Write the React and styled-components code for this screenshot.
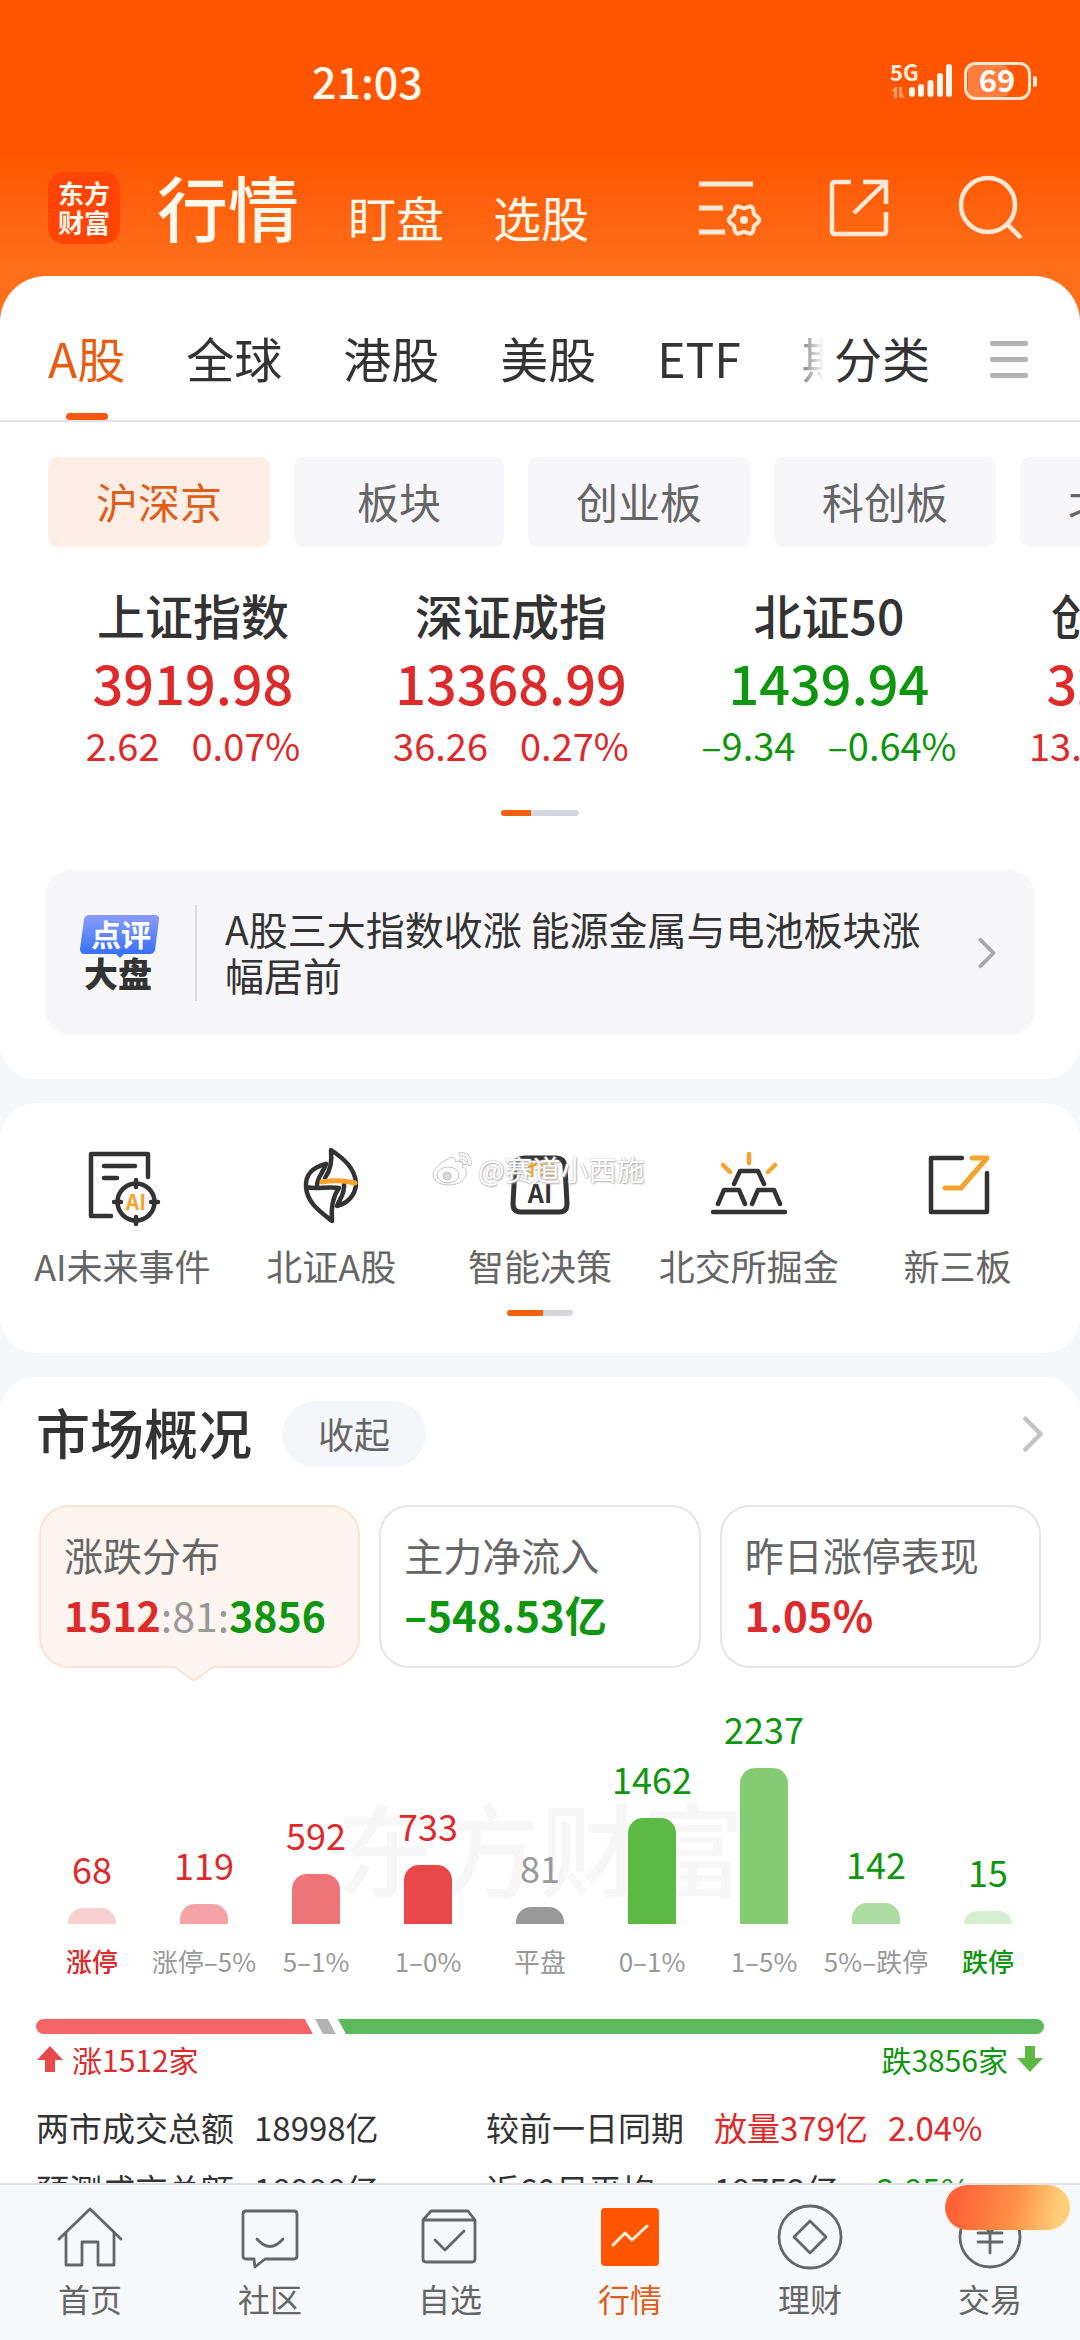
import React, { useState } from 'react'
import styled, { createGlobalStyle, css } from 'styled-components'

const RED = '#dd2a2a'
const GREEN = '#0f960f'
const ORANGE = '#ff5500'
const AMBER = '#f5a52f'
const INK = '#333333'
const GREY = '#666666'

const tones = { up: RED, down: GREEN, flat: '#999999', ink: INK }

const markets = ['A股', '全球', '港股', '美股', 'ETF', '期货']
const boards = ['沪深京', '板块', '创业板', '科创板', '北交所']

const indices = [
  { name: '上证指数', value: '3919.98', change: '2.62', rate: '0.07%', tone: 'up' },
  { name: '深证成指', value: '13368.99', change: '36.26', rate: '0.27%', tone: 'up' },
  { name: '北证50', value: '1439.94', change: '–9.34', rate: '–0.64%', tone: 'down' },
  { name: '创业板指', value: '3229.58', change: '13.02', rate: '0.40%', tone: 'up' },
]

const distribution = [
  { count: 68, label: '涨停', height: 16, fill: '#f9d0d0', tone: 'up', strong: true },
  { count: 119, label: '涨停–5%', height: 20, fill: '#f4a4a6', tone: 'up' },
  { count: 592, label: '5–1%', height: 50, fill: '#ee7577', tone: 'up' },
  { count: 733, label: '1–0%', height: 59, fill: '#e84849', tone: 'up' },
  { count: 81, label: '平盘', height: 17, fill: '#999999', tone: 'flat' },
  { count: 1462, label: '0–1%', height: 106, fill: '#5cb944', tone: 'down' },
  { count: 2237, label: '1–5%', height: 156, fill: '#84cb74', tone: 'down' },
  { count: 142, label: '5%–跌停', height: 21, fill: '#aedda3', tone: 'down' },
  { count: 15, label: '跌停', height: 13, fill: '#d5efd0', tone: 'down', strong: true },
]

// six-lobed outline of the settings gear
const gearPoints = Array.from({ length: 72 }, (_, i) => {
  const a = (i / 72) * Math.PI * 2
  const r = 13.4 + 1.7 * Math.cos(a * 6)
  return `${(50 + r * Math.cos(a)).toFixed(2)},${(48 + r * Math.sin(a)).toFixed(2)}`
}).join(' ')

function App() {
  const [market, setMarket] = useState('A股')
  const [board, setBoard] = useState('沪深京')
  const [page, setPage] = useState('行情')

  return (
    <>
      <GlobalStyle />
      <Page>
        <Scroll>
          <StatusBar>
            <Clock>21:03</Clock>
            <SignalIcon />
          </StatusBar>
          <NavBar>
            <Logo><span>东方</span><span>财富</span></Logo>
            <NavTitle>行情</NavTitle>
            <NavLink href="#">盯盘</NavLink>
            <NavLink href="#">选股</NavLink>
            <NavActions>
              <IconButton aria-label="设置"><ListGearIcon /></IconButton>
              <IconButton aria-label="分享"><ShareIcon /></IconButton>
              <IconButton aria-label="搜索"><SearchIcon /></IconButton>
            </NavActions>
          </NavBar>

          <Sheet>
            <TabRow>
              <TabList>
                {markets.map(m => (
                  <Tab key={m} $active={m === market} onClick={() => setMarket(m)}>{m}</Tab>
                ))}
              </TabList>
              <Tab>分类</Tab>
              <MenuButton aria-label="菜单"><i /><i /><i /></MenuButton>
            </TabRow>
            <Chips>
              {boards.map(b => (
                <Chip key={b} $active={b === board} onClick={() => setBoard(b)}>{b}</Chip>
              ))}
            </Chips>
            <IndexRow>
              {indices.map(item => (
                <IndexCard key={item.name}>
                  <IndexName>{item.name}</IndexName>
                  <IndexValue $tone={item.tone}>{item.value}</IndexValue>
                  <IndexChange $tone={item.tone}>
                    <span>{item.change}</span>
                    <span>{item.rate}</span>
                  </IndexChange>
                </IndexCard>
              ))}
            </IndexRow>
            <Pager $width={78} $on={30} />
            <Notice href="#">
              <ReviewBadge />
              <NoticeText>A股三大指数收涨 能源金属与电池板块涨幅居前</NoticeText>
              <Chevron width={20} height={32} color="#a8a8a8" />
            </Notice>
          </Sheet>

          <ToolCard>
            <Tools>
              <Tool href="#"><EventIcon />AI未来事件</Tool>
              <Tool href="#"><FlameIcon />北证A股</Tool>
              <Tool href="#"><DecisionIcon />智能决策</Tool>
              <Tool href="#"><IngotIcon />北交所掘金</Tool>
              <Tool href="#"><BoardIcon />新三板</Tool>
            </Tools>
            <Pager $width={66} $on={36} />
            <Signature>
              <WeiboIcon />
              @赛道小西施
            </Signature>
          </ToolCard>

          <MarketCard>
            <MarketHead>
              <h2>市场概况</h2>
              <Fold>收起</Fold>
              <Chevron width={22} height={38} color="#c4c4c4" />
            </MarketHead>
            <Summary>
              <SummaryCard $active>
                <SummaryLabel>涨跌分布</SummaryLabel>
                <SummaryValue $small>
                  <Tone $tone="up">1512</Tone>
                  <Thin>:81:</Thin>
                  <Tone $tone="down">3856</Tone>
                </SummaryValue>
                <Pointer viewBox="0 0 42 15"><path d="M0 0h42v1c-4 0-5 2-7 4l-11 8c-2 1-4 1-6 0L7 5C5 3 4 1 0 1z" fill="#fef5f0" /><path d="M0 1c4 0 5 2 7 4l11 8c2 1 4 1 6 0l11-8c2-2 3-4 7-4" fill="none" stroke="#fae4d8" strokeWidth="2" /></Pointer>
              </SummaryCard>
              <SummaryCard>
                <SummaryLabel>主力净流入</SummaryLabel>
                <SummaryValue><Tone $tone="down">–548.53亿</Tone></SummaryValue>
              </SummaryCard>
              <SummaryCard>
                <SummaryLabel>昨日涨停表现</SummaryLabel>
                <SummaryValue><Tone $tone="up">1.05%</Tone></SummaryValue>
              </SummaryCard>
            </Summary>

            <Chart>
              <ChartMark>东方财富</ChartMark>
              {distribution.map(d => (
                <Column key={d.label}>
                  <Count $tone={d.tone}>{d.count}</Count>
                  <Bar $fill={d.fill} style={{ height: d.height }} />
                  <Range $tone={d.strong ? d.tone : 'flat'} $strong={d.strong}>{d.label}</Range>
                </Column>
              ))}
            </Chart>

            <Ratio>
              <RatioUp />
              <RatioFlat />
              <RatioDown />
            </Ratio>
            <RatioLabels>
              <RatioLabel $tone="up"><ArrowIcon color="#e84849" />涨1512家</RatioLabel>
              <RatioLabel $tone="down">跌3856家<ArrowIcon color="#5cb944" down /></RatioLabel>
            </RatioLabels>

            <Stats>
              <Stat>
                <dt>两市成交总额</dt>
                <dd>18998亿</dd>
              </Stat>
              <Stat $wide>
                <dt>较前一日同期</dt>
                <dd><Tone $tone="up">放量379亿</Tone><Tone $tone="up">2.04%</Tone></dd>
              </Stat>
              <Stat>
                <dt>预测成交总额</dt>
                <dd>18998亿</dd>
              </Stat>
              <Stat $wide>
                <dt>近60日平均</dt>
                <dd><span>19752亿</span><Tone $tone="down">–3.85%</Tone></dd>
              </Stat>
            </Stats>
          </MarketCard>
        </Scroll>

        <TabBar>
          {tabs.map(({ name, Icon }) => (
            <TabItem key={name} $active={name === page} onClick={() => setPage(name)}>
              <Icon />
              {name}
            </TabItem>
          ))}
          <Bubble />
        </TabBar>
      </Page>
    </>
  )
}

export default App

function SignalIcon() {
  return (
    <svg width="150" height="40" viewBox="0 0 150 40" fill="none">
      <text x="0" y="21" fontSize="22" fontWeight="700" fill="#fff0e2">5G</text>
      <g fill="#ff9a66">
        <path d="M1 31l6-5v12H4v-7zM15 38l-6-1V27h3v6z" />
      </g>
      <g stroke="#fff5ea" strokeWidth="6" strokeLinecap="round">
        <path d="M22 30v4M31 27v7M40.500 23v11M50 16v18M59 7v27" />
      </g>
      <rect x="78" y="5" width="41" height="32" rx="6" fill="#ff7d3d" />
      <rect x="75.500" y="3.500" width="64" height="35" rx="10" stroke="#ffe6d0" strokeWidth="3" />
      <rect x="143" y="16" width="4" height="11" rx="2" fill="#ffe6d0" />
      <text x="107" y="32" fontSize="31" fontWeight="700" textAnchor="middle" fill="#fff">69</text>
    </svg>
  )
}

function ListGearIcon() {
  return (
    <svg width="72" height="72" viewBox="0 0 72 72" fill="none" stroke="#ffe9d6" strokeWidth="5">
      <path d="M5 12h54M5 36h24M5 60h26" />
      <polygon points={gearPoints} strokeWidth="4" strokeLinejoin="round" />
      <circle cx="50" cy="48" r="4" fill="#ffe9d6" stroke="none" />
    </svg>
  )
}

function ShareIcon() {
  return (
    <svg width="72" height="72" viewBox="0 0 72 72" fill="none" stroke="#ffe9d6" strokeWidth="4.500">
      <path d="M27 10H11q-3 0-3 3v46q0 3 3 3h48q3 0 3-3V40M39 10h23v22M30 41l31-30" />
    </svg>
  )
}

function SearchIcon() {
  return (
    <svg width="72" height="72" viewBox="0 0 72 72" fill="none" stroke="#ffe9d6" strokeWidth="4.500">
      <circle cx="34" cy="33" r="27" />
      <path d="M53 52l14 14" />
    </svg>
  )
}

function Chevron({ width, height, color }) {
  return (
    <svg width={width} height={height} viewBox="0 0 20 34" fill="none" stroke={color} strokeWidth="4" strokeLinecap="round" strokeLinejoin="round">
      <path d="M3 3l14 14L3 31" />
    </svg>
  )
}

function ReviewBadge() {
  return (
    <svg width="80" height="80" viewBox="0 0 80 80">
      <defs>
        <linearGradient id="badge" x1="0" y1="0" x2="0" y2="1">
          <stop offset="0" stopColor="#8b9dfb" />
          <stop offset="1" stopColor="#2f6df6" />
        </linearGradient>
      </defs>
      <path d="M9 2h66q5 0 4 5l-4 30q-1 4-5 4H44l-4 4-4-4H5q-5 0-5-5L4 6q1-4 5-4z" fill="url(#badge)" />
      <text x="41" y="33" fontSize="30" fontWeight="700" textAnchor="middle" fill="#fff">点评</text>
      <text x="38" y="74" fontSize="34" fontWeight="900" textAnchor="middle" fill="#333">大盘</text>
    </svg>
  )
}

function EventIcon() {
  return (
    <svg width="80" height="80" viewBox="0 0 80 80" fill="none" stroke={INK} strokeWidth="4.500" strokeLinecap="round" strokeLinejoin="round">
      <path d="M29 70H9V8h57v23M22 20h31M22 32h13" />
      <circle cx="54" cy="56" r="18.500" />
      <path d="M54 34v7M54 71v7M32 56h7M69 56h7" />
      <text x="54" y="64" fontSize="21" fontWeight="700" textAnchor="middle" fill={AMBER} stroke="none">AI</text>
    </svg>
  )
}

function FlameIcon() {
  return (
    <svg width="80" height="80" viewBox="0 0 80 80" fill="none" stroke={INK} strokeWidth="4.500" strokeLinejoin="round" strokeLinecap="round">
      <path d="M34 32C40 24 41 14 40 4c12 8 24 18 25 33" />
      <path d="M35 18C22 21 14 29 15 41c10 3 22-1 33 1-6 8-8 20-7 33C27 64 16 56 15 41" />
      <path d="M35 18c-3 9-9 13-9 22M53 38c1 10-4 14-7 22 12-3 18-12 19-21" />
      <path d="M31 36q17-3 33 1" stroke={AMBER} strokeWidth="5" />
    </svg>
  )
}

function DecisionIcon() {
  return (
    <svg width="80" height="80" viewBox="0 0 80 80" fill="none" stroke={INK} strokeWidth="5" strokeLinecap="round" strokeLinejoin="round">
      <path d="M24 12h32q8 0 9 8l2 38q0 8-8 8H21q-8 0-8-8l2-38q1-8 9-8z" />
      <path d="M29 21l7-3M32 18v12l-4-4M42 19h11M42 24h11M42 29h11" stroke={AMBER} strokeWidth="3" />
      <text x="40" y="57" fontSize="25" fontWeight="700" textAnchor="middle" fill={INK} stroke="none">AI</text>
    </svg>
  )
}

function IngotIcon() {
  return (
    <svg width="80" height="80" viewBox="0 0 80 80" fill="none" stroke={INK} strokeWidth="4.500" strokeLinecap="round" strokeLinejoin="round">
      <path d="M4 66h72M25 38l6-13h18l6 13M9 58l6-14h15l6 14M43 58l6-14h16l6 14" />
      <path d="M40 8v9M14 19l7 7M66 19l-7 7" stroke={AMBER} />
    </svg>
  )
}

function BoardIcon() {
  return (
    <svg width="80" height="80" viewBox="0 0 80 80" fill="none" stroke={INK} strokeWidth="4.500" strokeLinecap="round" strokeLinejoin="round">
      <path d="M44 12H13v54h56V27" />
      <path d="M54 12h15L43 42H27" stroke={AMBER} strokeWidth="5" />
    </svg>
  )
}

function WeiboIcon() {
  return (
    <svg width="42" height="36" viewBox="0 0 42 36" fill="#fff" stroke="#c4c4c4" strokeWidth="1">
      <path d="M16 8c4-3 8-2 7 3 6-2 9 0 7 5 4 1 5 4 4 8-2 7-10 10-17 10C8 34 1 30 1 24 1 18 9 11 16 8z" />
      <ellipse cx="16" cy="24" rx="11" ry="8" />
      <circle cx="15" cy="25" r="4" fill="#d8d8d8" />
      <path d="M27 2c7-2 14 4 12 13l-3-1c1-6-3-10-8-9zM28 8c4-1 7 2 6 6l-3-1c0-2-1-3-3-2z" />
    </svg>
  )
}

function ArrowIcon({ color, down }) {
  return (
    <svg width="28" height="28" viewBox="0 0 28 28" fill={color}>
      <path d={down ? 'M9 1h10v12h8L14 27 1 13h8z' : 'M9 27h10V15h8L14 1 1 15h8z'} />
    </svg>
  )
}

function TabIcon({ children }) {
  return (
    <svg width="72" height="68" viewBox="0 0 72 68" fill="none" stroke={GREY} strokeWidth="2.800" strokeLinejoin="round" strokeLinecap="round">
      {children}
    </svg>
  )
}

const HomeIcon = () => (
  <TabIcon><path d="M5 35L36 5l31 30M12 29v32h16V38h16v23h16V29" /></TabIcon>
)

const ChatIcon = () => (
  <TabIcon>
    <path d="M12 7h48q3 0 3 3v42q0 3-3 3H31l-10 8-1-8h-8q-3 0-3-3V10q0-3 3-3z" />
    <path d="M23 35q13 15 26 0" />
  </TabIcon>
)

const PickIcon = () => (
  <TabIcon>
    <path d="M9 16h52v39q0 3-3 3H12q-3 0-3-3V16l8-9h37l7 9M21 36l10 10 19-19" />
  </TabIcon>
)

const TrendIcon = () => (
  <TabIcon>
    <rect x="7" y="4" width="58" height="58" rx="4" fill={ORANGE} stroke="none" />
    <path d="M19 41l12-12 7 7 15-14" stroke="#ffeedd" strokeWidth="3" />
  </TabIcon>
)

const CoinIcon = () => (
  <TabIcon>
    <circle cx="36" cy="33" r="31" />
    <path d="M36 17l16 16-16 16-16-16z" />
  </TabIcon>
)

const YuanIcon = () => (
  <TabIcon>
    <circle cx="36" cy="33" r="30" />
    <path d="M26 16l10 13 10-13M24 29h24M24 38h24M36 29v20" />
  </TabIcon>
)

const tabs = [
  { name: '首页', Icon: HomeIcon },
  { name: '社区', Icon: ChatIcon },
  { name: '自选', Icon: PickIcon },
  { name: '行情', Icon: TrendIcon },
  { name: '理财', Icon: CoinIcon },
  { name: '交易', Icon: YuanIcon },
]

const GlobalStyle = createGlobalStyle`
  * {
    box-sizing: border-box;
    margin: 0;
    padding: 0;
  }
  body {
    font-family: 'Noto Sans CJK SC', 'Noto Sans', sans-serif;
    color: ${INK};
    background: #f5f7fa;
  }
  button {
    font: inherit;
    color: inherit;
    background: none;
    border: none;
    cursor: pointer;
  }
  a {
    color: inherit;
    text-decoration: none;
  }
  svg {
    display: block;
    flex-shrink: 0;
  }
`

const Page = styled.div`
  display: flex;
  flex-direction: column;
  height: 100vh;
  background: #f5f7fa;
`

const Scroll = styled.main`
  flex: 1;
  min-height: 0;
  overflow: hidden;
  background: linear-gradient(${ORANGE} 150px, #ff6f1a 270px) no-repeat;
  background-size: 100% 340px;
`

const StatusBar = styled.div`
  display: flex;
  align-items: center;
  justify-content: space-between;
  height: 160px;
  padding: 0 40px 0 312px;
`

const Clock = styled.time`
  font-size: 43px;
  line-height: 60px;
  font-weight: 500;
  color: #fffaf0;
`

const NavBar = styled.header`
  display: flex;
  align-items: center;
  height: 116px;
  padding: 0 54px 20px 48px;
  color: #fff8ec;
`

const Logo = styled.div`
  display: flex;
  flex-direction: column;
  align-items: center;
  justify-content: center;
  width: 72px;
  height: 72px;
  padding-bottom: 2px;
  border-radius: 16px;
  background: #ff4405;
  font-size: 26px;
  line-height: 29px;
  font-weight: 700;
`

const NavTitle = styled.h1`
  margin-left: 37px;
  padding-bottom: 6px;
  font-size: 71px;
  line-height: 72px;
  font-weight: 500;
`

const NavLink = styled.a`
  align-self: flex-end;
  margin-left: 49px;
  padding-bottom: 14px;
  font-size: 48px;
  line-height: 52px;
`

const NavActions = styled.div`
  display: flex;
  gap: 58px;
  margin-left: auto;
`

const IconButton = styled.button`
  display: flex;
`

const Sheet = styled.section`
  padding-bottom: 44px;
  border-radius: 46px 46px 36px 36px;
  background: #fff;
`

const TabRow = styled.nav`
  display: flex;
  height: 146px;
  padding: 0 52px 0 48px;
  border-bottom: 2px solid #e3e3e3;
`

const TabList = styled.div`
  display: flex;
  flex: 1;
  gap: 61px;
  min-width: 0;
  margin-right: 10px;
  overflow: hidden;
  mask-image: linear-gradient(to left, transparent, #000 36px);
`

const Tab = styled.button`
  position: relative;
  flex-shrink: 0;
  padding-top: 17px;
  font-size: 48px;
  color: ${props => props.$active ? '#ea5c14' : INK};

  ${props => props.$active && css`
    &::after {
      content: '';
      position: absolute;
      left: calc(50% - 21px);
      bottom: 0;
      width: 42px;
      height: 7px;
      border-radius: 4px;
      background: #f55a14;
    }
  `}
`

const MenuButton = styled.button`
  display: flex;
  flex-direction: column;
  justify-content: center;
  gap: 11px;
  width: 38px;
  margin-left: 60px;
  padding-top: 22px;

  i {
    height: 5px;
    border-radius: 2px;
    background: #b3b3b3;
  }
`

const Chips = styled.div`
  display: flex;
  gap: 24px;
  padding: 35px 0 0 48px;
  overflow: hidden;
`

const Chip = styled.button`
  flex-shrink: 0;
  min-width: 210px;
  height: 90px;
  padding: 0 48px 4px;
  border-radius: 10px;
  font-size: 42px;
  background: ${props => props.$active ? '#feeee6' : '#f7f7fa'};
  color: ${props => props.$active ? '#dc5f1c' : GREY};
`

const IndexRow = styled.div`
  display: flex;
  padding: 34px 0 0 34px;
  overflow: hidden;
`

const IndexCard = styled.div`
  display: flex;
  flex-direction: column;
  align-items: center;
  flex: 0 0 30.4%;
  white-space: nowrap;
`

const IndexName = styled.div`
  font-size: 48px;
  line-height: 66px;
  font-weight: 500;
`

const IndexValue = styled.div`
  font-size: 54px;
  line-height: 70px;
  font-weight: 500;
  color: ${props => tones[props.$tone]};
`

const IndexChange = styled.div`
  display: flex;
  gap: 32px;
  font-size: 38px;
  line-height: 56px;
  color: ${props => tones[props.$tone]};
`

const Pager = styled.div`
  width: ${props => props.$width}px;
  height: 6px;
  margin: 37px auto 0;
  border-radius: 3px;
  background: linear-gradient(to right, #f26012 ${props => props.$on}px, #d5d7dd ${props => props.$on}px);
`

const Notice = styled.a`
  display: flex;
  align-items: center;
  height: 165px;
  margin: 54px 45px 0;
  padding: 0 38px 0 35px;
  border-radius: 26px;
  background: #f7f7fa;
`

const NoticeText = styled.p`
  flex: 1;
  margin: 0 38px 0 35px;
  padding: 0 0 4px 28px;
  border-left: 2px solid #dcdcdf;
  font-size: 39px;
  line-height: 46px;
`

const Card = styled.section`
  position: relative;
  margin-top: 24px;
  border-radius: 36px;
  background: #fff;
`

const ToolCard = styled(Card)`
  height: 250px;
  padding: 43px 18px 0;

  ${Pager} {
    margin-top: 20px;
  }
`

const Tools = styled.div`
  display: grid;
  grid-template-columns: repeat(5, 1fr);
`

const Tool = styled.a`
  display: flex;
  flex-direction: column;
  align-items: center;
  gap: 14px;
  font-size: 36px;
  line-height: 50px;
  white-space: nowrap;
  color: ${GREY};
`

// signature printed over the shortcuts
const Signature = styled.div`
  position: absolute;
  top: 48px;
  left: 40%;
  display: flex;
  align-items: center;
  gap: 4px;
  font-size: 28px;
  line-height: 36px;
  color: #fff;
  text-shadow: 0 0 2px #a6a6a6, 1px 1px 2px #b8b8b8;
`

const MarketCard = styled(Card)`
  padding: 24px 36px 0;
`

const MarketHead = styled.div`
  display: flex;
  align-items: center;
  height: 66px;

  h2 {
    padding-bottom: 4px;
    font-size: 54px;
    line-height: 62px;
    font-weight: 500;
  }

  svg {
    margin-left: auto;
  }
`

const Fold = styled.button`
  height: 66px;
  margin-left: 30px;
  padding: 0 36px 3px;
  border-radius: 33px;
  font-size: 36px;
  background: #f5f6f9;
  color: ${GREY};
`

const Summary = styled.div`
  display: grid;
  grid-template-columns: repeat(3, 1fr);
  gap: 19px;
  margin-top: 38px;
  padding: 0 3px;
`

const SummaryCard = styled.div`
  position: relative;
  height: 163px;
  padding: 19px 0 0 23px;
  border: 2px solid ${props => props.$active ? '#fae4d8' : '#e6e6e6'};
  border-radius: 30px;
  background: ${props => props.$active ? '#fef5f0' : '#fff'};
  white-space: nowrap;
`

const SummaryLabel = styled.div`
  font-size: 39px;
  line-height: 56px;
  color: ${GREY};
`

const SummaryValue = styled.div`
  font-size: ${props => props.$small ? 41 : 42}px;
  line-height: 64px;
  font-weight: 700;
`

const Tone = styled.span`
  color: ${props => tones[props.$tone]};
`

const Thin = styled.span`
  font-weight: 400;
  color: #999;
`

const Pointer = styled.svg`
  position: absolute;
  left: calc(50% - 27px);
  top: 100%;
  width: 42px;
  height: 15px;
`

const Chart = styled.div`
  position: relative;
  display: grid;
  grid-template-columns: repeat(9, 1fr);
  align-items: end;
  height: 312px;
`

const ChartMark = styled.div`
  position: absolute;
  top: 108px;
  left: 0;
  right: 0;
  text-align: center;
  font-size: 102px;
  line-height: 140px;
  font-weight: 500;
  color: #f7f7f7;
`

const Column = styled.div`
  position: relative;
  display: flex;
  flex-direction: column;
  align-items: center;
  white-space: nowrap;
`

const Count = styled.div`
  margin-bottom: 15px;
  font-size: 36px;
  line-height: 50px;
  color: ${props => tones[props.$tone]};
`

const Bar = styled.div`
  width: 48px;
  border-radius: 15px 15px 0 0;
  background: ${props => props.$fill};
`

const Range = styled.div`
  margin-top: 18px;
  font-size: 26px;
  line-height: 38px;
  font-weight: ${props => props.$strong ? 500 : 400};
  color: ${props => tones[props.$tone]};
`

const Ratio = styled.div`
  display: flex;
  gap: 2px;
  height: 15px;
  margin-top: 39px;
  border-radius: 8px;
  overflow: hidden;
`

const RatioUp = styled.div`
  flex: 1512;
  background: #f56565;
  clip-path: polygon(0 0, calc(100% - 8px) 0, 100% 100%, 0 100%);
`

const RatioFlat = styled.div`
  width: 21px;
  background: #b3b3b3;
  clip-path: polygon(0 0, calc(100% - 8px) 0, 100% 100%, 8px 100%);
`

const RatioDown = styled.div`
  flex: 3856;
  background: #5cb95c;
  clip-path: polygon(0 0, 100% 0, 100% 100%, 8px 100%);
`

const RatioLabels = styled.div`
  display: flex;
  justify-content: space-between;
  margin-top: 5px;
`

const RatioLabel = styled.div`
  display: flex;
  align-items: center;
  gap: 8px;
  font-size: 30px;
  line-height: 40px;
  color: ${props => tones[props.$tone]};
`

const Stats = styled.dl`
  display: grid;
  grid-template-columns: 450px 1fr;
  row-gap: 12px;
  margin-top: 23px;
`

const Stat = styled.div`
  display: flex;
  font-size: 33px;
  line-height: 50px;
  white-space: nowrap;

  dt {
    width: ${props => props.$wide ? 228 : 218}px;
  }

  dd {
    display: flex;
    gap: 20px;
  }
`

const TabBar = styled.nav`
  position: relative;
  display: grid;
  grid-template-columns: repeat(6, 1fr);
  height: 157px;
  border-top: 2px solid #e2e2e4;
  background: #f7f8fa;
`

const TabItem = styled.button`
  display: flex;
  flex-direction: column;
  align-items: center;
  gap: 6px;
  padding-top: 19px;
  font-size: 32px;
  line-height: 40px;
  color: ${props => props.$active ? '#dc5f1c' : GREY};
`

const Bubble = styled.div`
  position: absolute;
  top: 0;
  right: 10px;
  width: 125px;
  height: 45px;
  border-radius: 23px;
  background: linear-gradient(100deg, #ff6236 10%, #ff9049 55%, #ffcf78 90%);
`
